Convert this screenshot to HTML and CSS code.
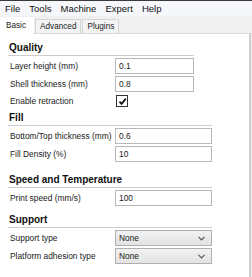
FILE: index.html
```
<!DOCTYPE html>
<html lang="en">
<head>
  <meta charset="UTF-8">
  <title>Cura</title>
  <link rel="stylesheet" href="styles.css">
</head>
<body>
  <div class="topline"></div>
  <div class="menubar">
    <span>File</span>
    <span>Tools</span>
    <span>Machine</span>
    <span>Expert</span>
    <span>Help</span>
  </div>
  <div class="tabs">
    <div class="tab active">Basic</div>
    <div class="tab">Advanced</div>
    <div class="tab">Plugins</div>
  </div>
  <div class="panel">
    <div class="content">
      <div class="section quality">
        <div class="title">Quality</div>
        <div class="rows">
          <div class="row"><label>Layer height (mm)</label><div class="field">0.1</div></div>
          <div class="row"><label>Shell thickness (mm)</label><div class="field">0.8</div></div>
          <div class="row check-row">
            <label>Enable retraction</label>
            <div class="checkbox">
              <svg width="9" height="9" viewBox="0 0 9 9"><path d="M1.5 4.6 L3.6 6.9 L7.8 1.6" fill="none" stroke="#111" stroke-width="1.7"/></svg>
            </div>
          </div>
        </div>
      </div>

      <div class="section fill">
        <div class="title">Fill</div>
        <div class="rows">
          <div class="row"><label>Bottom/Top thickness (mm)</label><div class="field">0.6</div></div>
          <div class="row"><label>Fill Density (%)</label><div class="field">10</div></div>
        </div>
      </div>

      <div class="section speed">
        <div class="title">Speed and Temperature</div>
        <div class="rows">
          <div class="row"><label>Print speed (mm/s)</label><div class="field">100</div></div>
        </div>
      </div>

      <div class="section support">
        <div class="title">Support</div>
        <div class="rows">
          <div class="row">
            <label>Support type</label>
            <div class="select"><span>None</span><svg width="7" height="5" viewBox="0 0 7 5"><path d="M0.5 0.8 L3.5 3.8 L6.5 0.8" fill="none" stroke="#555" stroke-width="1.2"/></svg></div>
          </div>
          <div class="row">
            <label>Platform adhesion type</label>
            <div class="select"><span>None</span><svg width="7" height="5" viewBox="0 0 7 5"><path d="M0.5 0.8 L3.5 3.8 L6.5 0.8" fill="none" stroke="#555" stroke-width="1.2"/></svg></div>
          </div>
        </div>
      </div>
    </div>
  </div>
</body>
</html>
```

FILE: styles.css
```
body {
  margin: 0;
  width: 252px;
  height: 277px;
  overflow: hidden;
  font-family: "Liberation Sans", Arial, sans-serif;
  font-size: 8.4px;
  color: #1a1a1a;
  background: #f0f0f0;
}

.topline {
  height: 1px;
  background: #3a3a3a;
}

.menubar {
  display: flex;
  align-items: center;
  gap: 9px;
  height: 15px;
  padding-left: 5px;
  font-size: 9.5px;
  color: #111;
  background: #f6f7fa;
}

.tabs {
  display: flex;
  align-items: flex-end;
  height: 17px;
}

.tab {
  height: 13px;
  line-height: 13px;
  padding: 0 4px;
  margin-right: 1px;
  font-size: 8.2px;
  color: #222;
  border: 1px solid #d5d5d5;
  border-bottom: none;
  background: #f3f3f3;
}

.tab.active {
  height: 16px;
  line-height: 15px;
  padding: 0 7px 0 5px;
  margin-bottom: -1px;
  background: #fff;
  border-color: #fff;
  position: relative;
  z-index: 1;
}

.panel {
  display: flex;
  height: 243px;
  border-top: 1px solid #d9d9d9;
  padding-right: 1px;
}

.content {
  flex: 1;
  padding: 7px 0 0 8px;
  background: #fff;
  border-right: 2px solid #cfcfcf;
}

.section {
  width: 204px;
}

.section.quality {
  width: 186px;
}

.section.fill {
  margin-top: 2px;
}

.section.speed {
  margin-top: 10px;
}

.section.support {
  margin-top: 6px;
}

.title {
  height: 14px;
  line-height: 14px;
  padding-left: 1px;
  font-size: 10px;
  font-weight: bold;
  color: #111;
  border-bottom: 1px solid #cdcdcd;
}

.rows {
  padding-top: 1px;
}

.row {
  display: flex;
  align-items: center;
  height: 18px;
}

.row.check-row {
  height: 16px;
}

.row label {
  width: 105px;
  padding-left: 2px;
  white-space: nowrap;
}

.field {
  flex: 1;
  height: 14px;
  line-height: 14px;
  padding-left: 3px;
  border: 1px solid #b8b8b8;
  background: #fff;
}

.checkbox {
  display: flex;
  align-items: center;
  justify-content: center;
  width: 10px;
  height: 10px;
  margin-left: 1px;
  border: 1px solid #333;
  background: #fff;
}

.select {
  flex: 1;
  display: flex;
  align-items: center;
  justify-content: space-between;
  height: 14px;
  padding: 0 6px 0 3px;
  border: 1px solid #b0b0b0;
  background: linear-gradient(#f2f2f2, #e3e3e3);
}
```
